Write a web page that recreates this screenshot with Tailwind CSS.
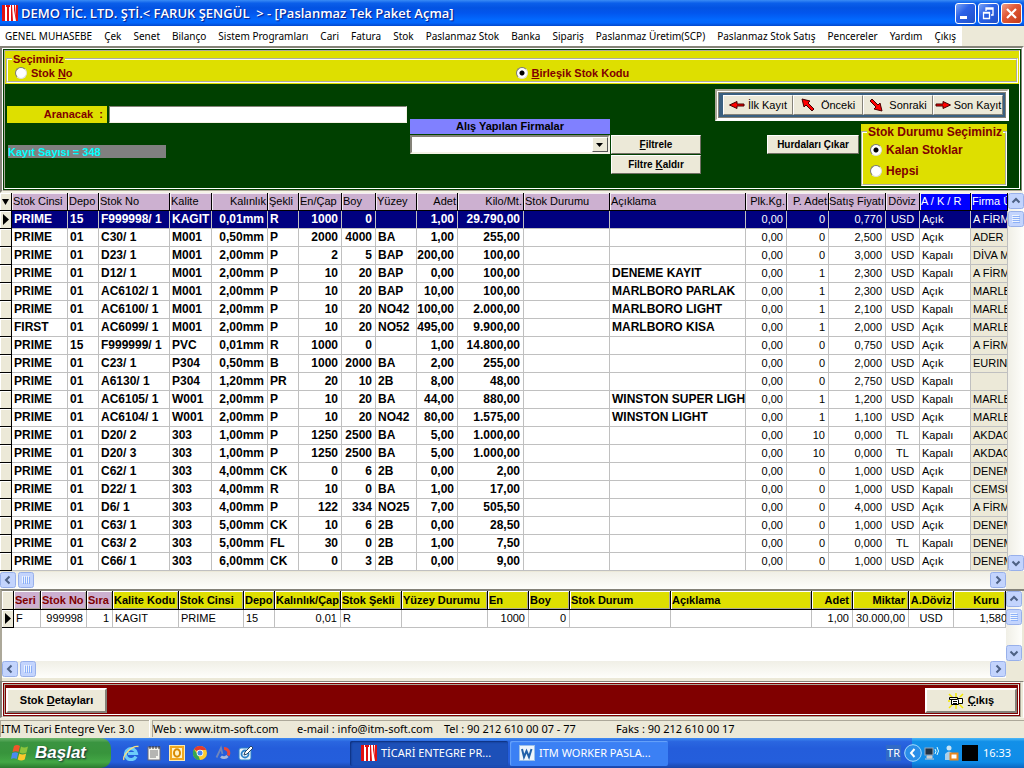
<!DOCTYPE html>
<html lang="tr">
<head>
<meta charset="utf-8">
<title>Paslanmaz Tek Paket Açma</title>
<script src="https://cdn.jsdelivr.net/npm/@tailwindcss/browser@4"></script>
</head>
<body class="flex min-h-screen flex-col overflow-x-hidden bg-[#ece9d8] font-['Liberation_Sans',Arial,sans-serif] text-[11px] text-black">

<svg class="hidden">
  <symbol id="itm" viewBox="0 0 16 16"><rect width="16" height="16" fill="#fff"/><path d="M0 0h3v16H0zM4 0h4v2H7v14H5V2H4zM9 0h1l1 16H9zM12 0h1l1 12V0h2v16h-2L12 5z" fill="#e01010"/></symbol>
  <symbol id="up" viewBox="0 0 16 16"><rect x=".5" y=".5" width="15" height="15" rx="2" fill="#c3d4fd" stroke="#98b0ea"/><path d="M4.500 9.500 8 6l3.500 3.500" fill="none" stroke="#4d6185" stroke-width="2"/></symbol>
  <symbol id="down" viewBox="0 0 16 16"><rect x=".5" y=".5" width="15" height="15" rx="2" fill="#c3d4fd" stroke="#98b0ea"/><path d="M4.500 6.500 8 10l3.500-3.500" fill="none" stroke="#4d6185" stroke-width="2"/></symbol>
  <symbol id="left" viewBox="0 0 16 16"><rect x=".5" y=".5" width="15" height="15" rx="2" fill="#c3d4fd" stroke="#98b0ea"/><path d="M9.500 4.500 6 8l3.500 3.500" fill="none" stroke="#4d6185" stroke-width="2"/></symbol>
  <symbol id="right" viewBox="0 0 16 16"><rect x=".5" y=".5" width="15" height="15" rx="2" fill="#c3d4fd" stroke="#98b0ea"/><path d="M6.500 4.500 10 8l-3.500 3.500" fill="none" stroke="#4d6185" stroke-width="2"/></symbol>
  <symbol id="gripv" viewBox="0 0 16 16"><rect x=".5" y=".5" width="15" height="15" rx="2" fill="#c3d4fd" stroke="#98b0ea"/><path d="M4 4.500h7M4 6.500h7M4 8.500h7M4 10.500h7" stroke="#eef4fe"/><path d="M5 5.500h7M5 7.500h7M5 9.500h7M5 11.500h7" stroke="#8cb0f8"/></symbol>
  <symbol id="griph" viewBox="0 0 16 16"><rect x=".5" y=".5" width="15" height="15" rx="2" fill="#c3d4fd" stroke="#98b0ea"/><path d="M4.500 4v7M6.500 4v7M8.500 4v7M10.500 4v7" stroke="#eef4fe"/><path d="M5.500 5v7M7.500 5v7M9.500 5v7M11.500 5v7" stroke="#8cb0f8"/></symbol>
</svg>

<header class="flex h-[26px] shrink-0 items-center gap-[3px] bg-[linear-gradient(180deg,#3a8cf5_0%,#0b5fea_12%,#0353e2_30%,#0256ee_50%,#0268fe_75%,#0265fb_88%,#0347cc_100%)] pr-[2px] pl-[2px]">
  <svg class="size-4"><use href="#itm"/></svg>
  <h1 class="flex-1 font-['Open_Sans','Noto_Sans',sans-serif] text-[13px] leading-[26px] font-semibold whitespace-pre text-white [text-shadow:1px_1px_1px_#0a1883]">DEMO TİC. LTD. ŞTİ.&lt; FARUK ŞENGÜL  &gt; - [Paslanmaz Tek Paket Açma]</h1>
  <button aria-label="Simge durumuna küçült" class="size-[21px] rounded-[3px] border border-white bg-[linear-gradient(135deg,#7ba4f5,#2b62e8_40%,#2050c8)]"><svg viewBox="0 0 19 19"><path d="M4 12h7v3H4z" fill="#fff"/></svg></button>
  <button aria-label="Önceki boyut" class="-ml-px size-[21px] rounded-[3px] border border-white bg-[linear-gradient(135deg,#7ba4f5,#2b62e8_40%,#2050c8)]"><svg viewBox="0 0 19 19"><path d="M7 7V4h7v7h-2M7 5h7M4.500 8.500h6v6h-6zM4 9h7" fill="none" stroke="#fff" stroke-width="1.300"/></svg></button>
  <button aria-label="Kapat" class="-ml-px size-[21px] rounded-[3px] border border-white bg-[linear-gradient(135deg,#f0a08a,#e25a38_40%,#c33a18)]"><svg viewBox="0 0 19 19"><path d="m5 5 9 9M14 5l-9 9" stroke="#fff" stroke-width="2.200"/></svg></button>
</header>

<nav class="flex h-5 shrink-0">
  <div id="menu" class="flex items-center gap-3 bg-white pr-[6px] pb-px pl-[5px] font-['Noto_Sans',sans-serif] text-[10px] leading-[18px] whitespace-nowrap"></div>
</nav>

<!-- search and filter panel -->
<section class="shrink-0 border-2 border-t-[#848278] border-r-white border-b-[#f4f2e6] border-l-[#848278]">
 <div class="border border-t-white border-r-[#848278] border-b-[#aca899] border-l-white bg-[#004000] p-px">
  <div class="border border-t-[#aca899] border-r-white border-b-white border-l-[#aca899]">
   <div class="bg-[#dedf00] px-px pt-px pb-px font-bold text-[#800000]">
    <fieldset class="min-w-0 border-2 border-[#fffff4] pb-px pl-[7px] [border-style:groove]">
     <legend class="-ml-[3px] px-px leading-[14px]">Seçiminiz</legend>
     <div class="grid grid-cols-2">
      <label class="flex h-[14px] items-center gap-1"><input type="radio" name="ara" class="size-3 appearance-none rounded-full border border-t-[#777] border-r-[#ddd] border-b-[#ddd] border-l-[#777] bg-white"><span>Stok <u>N</u>o</span></label>
      <label class="flex h-[14px] items-center gap-1"><input type="radio" name="ara" checked class="size-3 appearance-none rounded-full border border-t-[#777] border-r-[#ddd] border-b-[#ddd] border-l-[#777] bg-white checked:bg-[radial-gradient(circle,#000_2px,#fff_3px)]"><span><u>B</u>irleşik Stok Kodu</span></label>
     </div>
    </fieldset>
   </div>

   <div class="flex h-[104px] items-start font-bold">
    <div class="w-[402px] pt-[22px] pl-[2px]">
     <div class="flex gap-[2px]">
      <label for="q" class="h-[17px] w-[100px] bg-[#dedf00] pr-1 text-right leading-[17px] whitespace-pre text-[#800000]">Aranacak  :</label>
      <input id="q" type="text" class="h-[17px] min-w-0 flex-1 border border-t-[#848278] border-r-[#f4f2e6] border-b-[#f4f2e6] border-l-[#848278] bg-white px-1">
     </div>
     <p class="mt-[22px] ml-px h-[13px] w-[158px] bg-[#808080] leading-[14px] text-[#00ffff]">Kayıt Sayısı = 348</p>
    </div>
    <div class="ml-[3px] w-[200px] pt-[35px]">
     <label for="firma" class="block h-[15px] bg-[#8080ff] text-center leading-[15px]">Alış Yapılan Firmalar</label>
     <div class="relative mt-px">
      <select id="firma" class="block h-[19px] w-full appearance-none border-2 border-t-[#848278] border-r-[#f4f2e6] border-b-[#f4f2e6] border-l-[#848278] bg-white"><option></option></select>
      <svg class="pointer-events-none absolute top-[2px] right-[2px] h-[15px] w-4 border border-t-white border-r-[#555] border-b-[#555] border-l-white bg-[#ece9d8]" viewBox="0 0 14 13"><path d="M3 5h7L6.500 9z"/></svg>
     </div>
    </div>
    <div class="ml-px flex w-[90px] flex-col gap-px pt-[51px] text-[10px]">
     <button class="h-[19px] border border-t-white border-r-[#716f64] border-b-[#716f64] border-l-white bg-[#ece9d8] font-bold"><u>F</u>iltrele</button>
     <button class="h-[19px] border border-t-white border-r-[#716f64] border-b-[#716f64] border-l-white bg-[#ece9d8] font-bold">Filtre <u>K</u>aldır</button>
    </div>
    <div class="mt-[5px] mr-[10px] ml-auto w-[294px]">
     <div class="border-2 border-t-[#aca899] border-r-white border-b-white border-l-[#aca899] bg-white p-px">
      <div class="flex border border-[#848278] bg-[#3a6080] p-[2px] pl-[4px] font-normal whitespace-nowrap">
       <button class="flex h-5 w-[70px] items-center justify-center gap-[3px] border border-t-white border-r-[#848278] border-b-[#848278] border-l-white bg-[#ece9d8]"><svg class="h-3 w-4 shrink-0" viewBox="0 0 16 12"><path d="M.5 6 8 2.500V5h7v2H8v2.500z" fill="#f00" stroke="#400"/></svg>İlk Kayıt</button>
       <button class="flex h-5 w-[70px] items-center justify-center gap-[6px] border border-t-white border-r-[#848278] border-b-[#848278] border-l-white bg-[#ece9d8]"><svg class="size-[14px] shrink-0" viewBox="0 0 14 14"><path d="m1 1 8 2-2 2 6 6-2 2-6-6-2 2z" fill="#f00" stroke="#400"/></svg>Önceki</button>
       <button class="flex h-5 w-[70px] items-center justify-center gap-[6px] border border-t-white border-r-[#848278] border-b-[#848278] border-l-white bg-[#ece9d8]"><svg class="size-[14px] shrink-0" viewBox="0 0 14 14"><path d="m13 13-8-2 2-2-6-6 2-2 6 6 2-2z" fill="#f00" stroke="#400"/></svg>Sonraki</button>
       <button class="flex h-5 min-w-0 flex-1 items-center justify-center gap-[3px] border border-t-white border-r-[#848278] border-b-[#848278] border-l-white bg-[#ece9d8]"><svg class="h-3 w-4 shrink-0" viewBox="0 0 16 12"><path d="M15.500 6 8 2.500V5H1v2h7v2.500z" fill="#f00" stroke="#400"/></svg>Son Kayıt</button>
      </div>
     </div>
     <div class="mt-[3px] mr-[2px] flex items-start justify-end gap-[2px]">
      <button class="mt-[11px] h-[19px] w-[92px] border border-t-white border-r-[#716f64] border-b-[#716f64] border-l-white bg-[#ece9d8] text-[10px] font-bold">Hurdaları Çıkar</button>
      <div class="h-[62px] w-[146px] bg-[#dedf00] text-[12px] text-[#800000]">
       <fieldset class="h-[62px] min-w-0 border-2 border-[#fffff4] pl-[7px] [border-style:groove]">
        <legend class="-ml-[3px] px-px leading-4 whitespace-nowrap">Stok Durumu Seçiminiz</legend>
        <label class="mt-[2px] flex h-4 items-center gap-1"><input type="radio" name="durum" checked class="size-3 appearance-none rounded-full border border-t-[#777] border-r-[#ddd] border-b-[#ddd] border-l-[#777] bg-white checked:bg-[radial-gradient(circle,#000_2px,#fff_3px)]">Kalan Stoklar</label>
        <label class="mt-[5px] flex h-4 items-center gap-1"><input type="radio" name="durum" class="size-3 appearance-none rounded-full border border-t-[#777] border-r-[#ddd] border-b-[#ddd] border-l-[#777] bg-white">Hepsi</label>
       </fieldset>
      </div>
     </div>
    </div>
   </div>
  </div>
 </div>
</section>

<!-- stock grid -->
<section class="shrink-0">
  <div class="flex">
    <div class="min-w-0 flex-1 overflow-hidden bg-white">
      <table id="t1" class="w-full table-fixed border-separate border-spacing-0"></table>
    </div>
    <div class="flex w-4 flex-col bg-[linear-gradient(90deg,#f0efe6,#fefefb)]">
      <svg class="size-4"><use href="#up"/></svg><svg class="mt-[2px] size-4"><use href="#gripv"/></svg><svg class="mt-auto size-4"><use href="#down"/></svg>
    </div>
  </div>
  <div class="flex h-[18px] items-end pr-[18px]"><div class="flex h-[17px] flex-1 gap-[2px] bg-[linear-gradient(180deg,#f0efe6,#fefefb)]">
    <svg class="size-4"><use href="#left"/></svg><svg class="size-4"><use href="#griph"/></svg><svg class="ml-auto size-4"><use href="#right"/></svg>
  </div></div>
</section>

<!-- package grid -->
<section class="flex flex-1 flex-col border-t-2 border-l-2 border-t-[#848278] border-l-[#aca899] pr-[2px] pb-[3px]">
  <div class="flex flex-1">
    <div class="min-w-0 flex-1 overflow-hidden bg-white">
      <table id="t2" class="w-full table-fixed border-separate border-spacing-0"></table>
    </div>
    <div class="flex w-4 flex-col bg-[linear-gradient(90deg,#f0efe6,#fefefb)]">
      <svg class="size-4"><use href="#up"/></svg><svg class="mt-[2px] size-4"><use href="#gripv"/></svg><svg class="mt-auto size-4"><use href="#down"/></svg>
    </div>
  </div>
  <div class="flex pr-4"><div class="flex h-[17px] flex-1 gap-[2px] bg-[linear-gradient(180deg,#f0efe6,#fefefb)]">
    <svg class="size-4"><use href="#left"/></svg><svg class="size-4"><use href="#griph"/></svg><svg class="ml-auto size-4"><use href="#right"/></svg>
  </div></div>
</section>

<section class="shrink-0 border border-l-2 border-t-[#848278] border-r-white border-b-[#f4f2e6] border-l-[#848278] pr-[2px]">
 <div class="border border-t-white border-r-[#aca899] border-b-[#aca899] border-l-white bg-[#800000] p-px">
  <div class="flex h-[31px] justify-between border border-t-[#aca899] border-r-white border-b-white border-l-[#aca899] pt-[3px] pr-px pl-px">
    <button class="h-[25px] w-[101px] border-2 border-t-white border-r-[#848278] border-b-[#848278] border-l-white bg-[#ece9d8] font-bold">Stok <u>D</u>etayları</button>
    <button class="flex h-[25px] w-[92px] items-center justify-center gap-1 border-2 border-t-white border-r-[#848278] border-b-[#848278] border-l-white bg-[#ece9d8] font-bold"><svg class="size-4" viewBox="0 0 16 16"><path d="m1 1 4 4M15 1l-4 4M1 15l4-4M15 15l-4-4M8 0v16M0 8h16" stroke="#f4e800" stroke-width="1.500"/><path d="M1.500 5.500h8l1-1h2l1 1h2v5h-3l-1 1h-8z" fill="#fff"/><path d="M1.500 4.500h8v2h-8zM9.500 5.500h5M3.500 6.500v5h7v-5M5 8.500h4M5 10.500h4M10.500 10.500h4v-5" fill="none" stroke="#000"/></svg><span><u>Ç</u>ıkış</span></button>
  </div>
 </div>
</section>

<footer class="flex h-5 shrink-0 items-end gap-[3px] pb-px font-['Noto_Sans',sans-serif] text-[11px] leading-4 whitespace-nowrap">
  <div class="h-[17px] w-[149px] border-t border-l border-[#aca899] shadow-[1px_0_#fff]">ITM Ticari Entegre Ver. 3.0</div>
  <div class="flex h-[17px] flex-1 border-t border-l border-[#aca899]">
    <span class="w-36">Web : www.itm-soft.com</span><span class="w-[147px]">e-mail : info@itm-soft.com</span><span class="w-[172px]">Tel : 90 212 610 00 07 - 77</span><span>Faks : 90 212 610 00 17</span>
  </div>
</footer>

<div class="flex h-[30px] shrink-0 items-stretch bg-[linear-gradient(180deg,#3f8cf3_0%,#2a66e0_12%,#245ddb_35%,#245edc_80%,#1a45a8_100%)] font-['Noto_Sans',sans-serif] text-[11px] text-white">
  <button class="flex w-[111px] items-center gap-[6px] rounded-r-[10px] bg-[linear-gradient(180deg,#6bb56b_0%,#3a9440_15%,#38943c_50%,#43a745_80%,#2b7a2e_100%)] pl-[11px] font-['Liberation_Sans',sans-serif] text-[17px] font-bold italic [text-shadow:1px_1px_2px_#123]">
    <svg class="size-[18px]" viewBox="0 0 18 18"><path d="M3 2q3-2 6 0L7.500 8Q5 6.500 1.500 8z" fill="#f0562a"/><path d="M10 2.500q3 2 7 0L15.500 8.500q-3.500 2-7 0z" fill="#8cc43c"/><path d="M1.200 9q3.200-1.500 6 0L5.700 15q-3-1.700-5.700 0z" fill="#4a8af0"/><path d="M8.200 9.500q3.300 2 7 0L13.700 15.500q-3.500 2-7 0z" fill="#fcc82c"/></svg>Başlat</button>
  <div class="ml-3 flex w-[227px] items-center gap-[7px]">
    <svg class="size-4" viewBox="0 0 16 16"><path d="M13 11.500A5.500 5.500 0 1 1 13.500 8.500H5" fill="none" stroke="#6cccfa" stroke-width="3.200"/><path d="M1 15C-1 11 9 0 15.500 1.500" fill="none" stroke="#f8e080" stroke-width="1.300"/></svg>
    <svg class="size-4" viewBox="0 0 16 16"><rect x="2" y="2" width="12" height="13" fill="#f4f4ee" stroke="#667"/><path d="M4 1v3M7 1v3M10 1v3M13 1v3" stroke="#333"/><path d="M4 6h8M4 8h8M4 10h8M4 12h6" stroke="#777"/></svg>
    <svg class="size-4" viewBox="0 0 16 16"><rect x=".5" y=".5" width="15" height="15" fill="#f0a820" stroke="#fbe9b0"/><rect x="3" y="3" width="10" height="10" fill="#fff3c8"/><ellipse cx="8" cy="8" rx="3" ry="3.800" fill="none" stroke="#d88a00" stroke-width="2"/></svg>
    <svg class="size-4" viewBox="0 0 16 16"><circle cx="8" cy="8" r="7" fill="#fccc30"/><path d="M8 8 2 4.200A7 7 0 0 1 14.200 5H8z" fill="#e23b2e"/><path d="M2 4.200 6 10l2 5A7 7 0 0 1 2 4.200" fill="#35a552"/><circle cx="8" cy="8" r="3.300" fill="#fff"/><circle cx="8" cy="8" r="2.500" fill="#4587f0"/></svg>
    <svg class="size-4" viewBox="0 0 16 16"><path d="M1.500 12.500 6 3l1.500 6" fill="none" stroke="#6f86bc" stroke-width="1.800"/><path d="M9 3.500a4.500 4.500 0 0 1 4 7" fill="none" stroke="#e84838" stroke-width="3"/><path d="M12.500 11a4.500 4.500 0 0 1-6.500.5" fill="none" stroke="#a8b8d8" stroke-width="2.800"/></svg>
    <svg class="size-4" viewBox="0 0 16 16"><rect x="1" y="3" width="12" height="12" rx="2" fill="#e8f3fb" stroke="#2a80c8"/><circle cx="7" cy="9" r="3.500" fill="none" stroke="#2a80c8" stroke-width="1.800"/><path d="m6 10 1-3 6-6 2 2-6 6z" fill="#fff" stroke="#246"/></svg>
  </div>
  <div class="flex flex-1 items-center gap-[2px]">
    <button class="flex h-[25px] w-[158px] items-center gap-1 rounded-[2px] bg-[#1d50b8] pl-[11px] whitespace-nowrap shadow-[inset_1px_1px_2px_#0c2c78]"><svg class="size-4 shrink-0"><use href="#itm"/></svg>TİCARİ ENTEGRE PR...</button>
    <button class="flex h-[25px] w-[158px] items-center gap-1 rounded-[2px] bg-[#3b80f4] pl-[9px] whitespace-nowrap shadow-[inset_1px_1px_1px_#6aa4fa]"><svg class="size-4 shrink-0" viewBox="0 0 16 16"><rect x=".5" y=".5" width="15" height="15" fill="#eef5fc" stroke="#9cc0e8"/><path d="m3 4 2 8 2.500-6L10 12l2.500-8" fill="none" stroke="#2060a8" stroke-width="2"/></svg>ITM WORKER PASLA...</button>
  </div>
  <div class="flex items-center"><span class="bg-[#316ac5] px-px">TR</span></div>
  <div class="ml-[11px] flex w-[112px] items-center gap-[3px] bg-[linear-gradient(180deg,#4cb8f8_0%,#1290e8_12%,#0f8ce8_80%,#0c66c0_100%)] whitespace-nowrap">
    <svg class="-ml-2 size-[18px] shrink-0" viewBox="0 0 18 18"><circle cx="9" cy="9" r="8.300" fill="#2a8ee8" stroke="#a8dcfc"/><path d="M10.500 5 7 9l3.500 4" fill="none" stroke="#fff" stroke-width="2"/></svg>
    <svg class="-ml-px size-4 shrink-0" viewBox="0 0 16 16"><rect x="1" y="3" width="8" height="7" fill="#234" stroke="#9ab"/><path d="M3 11h5v2H3zM1 14h9" fill="#ccc" stroke="#ccc"/><path d="M11 4q2 2 0 5M13 2q3 4 0 8" fill="none" stroke="#dff"/></svg>
    <svg class="size-4 shrink-0" viewBox="0 0 16 16"><circle cx="6" cy="3" r="2.500" fill="#c8e4f4"/><path d="M2 15V9q4-5 8 0v6z" fill="#a8d0ec"/><rect x="7.500" y="8.500" width="7" height="6" fill="#fff" stroke="#e88820" stroke-width="2"/></svg>
    <span class="size-4 shrink-0 bg-black"></span><span class="ml-[2px]">16:33</span>
  </div>
</div>

<script>
document.getElementById('menu').innerHTML = ['GENEL MUHASEBE','Çek','Senet','Bilanço','Sistem Programları','Cari','Fatura','Stok','Paslanmaz Stok','Banka','Sipariş','Paslanmaz Üretim(SCP)','Paslanmaz Stok Satış','Pencereler','Yardım','Çıkış']
  .map(t => `<button>${t}</button>`).join('');

const cell = (text, align, extra) =>
  `<div class="flex h-[17px] overflow-hidden whitespace-pre leading-[17px] ${align === 'r' ? 'justify-end pr-[3px]' : align === 'c' ? 'justify-center' : 'pl-[2px]'} ${extra || ''}">${text}</div>`;
const cols = widths => '<colgroup>' + widths.map(w => `<col${w ? ` style="width:${w}px"` : ''}>`).join('') + '</colgroup>';

const w1 = [12,56,31,71,42,56,31,43,34,41,41,66,86,136,41,42,57,34,51,0];
const h1 = [['Stok Cinsi','l'],['Depo','l'],['Stok No','l'],['Kalite','l'],['Kalınlık','r'],['Şekli','l'],['En/Çap','l'],['Boy','l'],['Yüzey','l'],['Adet','r'],['Kilo/Mt.','r'],['Stok Durumu','l'],['Açıklama','l'],['Plk.Kg.','r'],['P. Adet','r'],['Satış Fiyatı','r'],['Döviz','c'],['A / K / R','l'],['Firma Ü','l']];
const a1 = 'llllrlrrlrrllrrrcll';
const rows = `PRIME|15|F999998/ 1|KAGIT|0,01mm|R|1000|0||1,00|29.790,00|||0,00|0|0,770|USD|Açık|A FİRM
PRIME|01|C30/ 1|M001|0,50mm|P|2000|4000|BA|1,00|255,00|||0,00|0|2,500|USD|Açık|ADER
PRIME|01|D23/ 1|M001|2,00mm|P|2|5|BAP|200,00|100,00|||0,00|0|3,000|USD|Kapalı|DİVA M
PRIME|01|D12/ 1|M001|2,00mm|P|10|20|BAP|0,00|100,00||DENEME KAYIT|0,00|1|2,300|USD|Kapalı|A FİRM
PRIME|01|AC6102/ 1|M001|2,00mm|P|10|20|BAP|10,00|100,00||MARLBORO PARLAK|0,00|1|2,300|USD|Açık|MARLB
PRIME|01|AC6100/ 1|M001|2,00mm|P|10|20|NO42|100,00|2.000,00||MARLBORO LIGHT|0,00|1|2,100|USD|Kapalı|MARLB
FIRST|01|AC6099/ 1|M001|2,00mm|P|10|20|NO52|495,00|9.900,00||MARLBORO KISA|0,00|1|2,000|USD|Açık|MARLB
PRIME|15|F999999/ 1|PVC|0,01mm|R|1000|0||1,00|14.800,00|||0,00|0|0,750|USD|Açık|A FİRM
PRIME|01|C23/ 1|P304|0,50mm|B|1000|2000|BA|2,00|255,00|||0,00|0|2,000|USD|Açık|EURIN
PRIME|01|A6130/ 1|P304|1,20mm|PR|20|10|2B|8,00|48,00|||0,00|0|2,750|USD|Kapalı|
PRIME|01|AC6105/ 1|W001|2,00mm|P|10|20|BA|44,00|880,00||WINSTON SUPER LIGH|0,00|1|1,200|USD|Kapalı|MARLB
PRIME|01|AC6104/ 1|W001|2,00mm|P|10|20|NO42|80,00|1.575,00||WINSTON LIGHT|0,00|1|1,100|USD|Açık|MARLB
PRIME|01|D20/ 2|303|1,00mm|P|1250|2500|BA|5,00|1.000,00|||0,00|10|0,000|TL|Kapalı|AKDAG
PRIME|01|D20/ 3|303|1,00mm|P|1250|2500|BA|5,00|1.000,00|||0,00|10|0,000|TL|Kapalı|AKDAG
PRIME|01|C62/ 1|303|4,00mm|CK|0|6|2B|0,00|2,00|||0,00|0|1,000|USD|Açık|DENEM
PRIME|01|D22/ 1|303|4,00mm|R|10|0|BA|1,00|17,00|||0,00|0|1,000|USD|Kapalı|CEMSU
PRIME|01|D6/ 1|303|4,00mm|P|122|334|NO25|7,00|505,50|||0,00|0|4,000|USD|Açık|A FİRM
PRIME|01|C63/ 1|303|5,00mm|CK|10|6|2B|0,00|28,50|||0,00|0|1,000|USD|Açık|DENEM
PRIME|01|C63/ 2|303|5,00mm|FL|30|0|2B|1,00|7,50|||0,00|0|0,000|TL|Kapalı|DENEM
PRIME|01|C66/ 1|303|6,00mm|CK|0|3|2B|0,00|9,00|||0,00|0|1,000|USD|Açık|DENEM`.split('\n').map(r => r.split('|'));
const marker = '<svg class="h-[17px] w-[11px]" viewBox="0 0 11 17"><path d="M3 3v11l6-5.500z"/></svg>';
const grip = 'border-r border-b border-black bg-[#ece9d8] p-0 shadow-[inset_1px_1px_#fff]';

document.getElementById('t1').innerHTML = cols(w1) + '<thead><tr>' +
  `<th class="${grip}"><svg class="h-[17px] w-[11px]" viewBox="0 0 11 17"><path d="M2 6h7l-3.500 6z"/></svg></th>` +
  h1.map(([t, a], i) => `<th class="border-r border-b border-black p-0 font-normal shadow-[inset_1px_1px_#f4ecf4] ${i > 16 ? 'bg-[#0000ff] text-white' : 'bg-[#ccb0d0]'}">${cell(t, a, a === 'r' ? '-mr-[2px]' : '-ml-px')}</th>`).join('') +
  '</tr></thead><tbody>' +
  rows.map((r, n) => `<tr><td class="${grip}">${n ? '' : marker}</td>` +
    r.map((t, i) => `<td class="border-r border-b border-[#c0c0c0] p-0 ${i < 13 ? 'text-[12px] font-bold' : ''} ${n === 0 ? 'bg-[#000080] text-white' : i === 18 ? 'bg-[#ece9d8]' : ''}">${cell(t, a1[i])}</td>`).join('') + '</tr>').join('') + '</tbody>';

const w2 = [12,27,46,26,66,65,31,66,61,86,41,41,101,141,41,56,45,0];
const h2 = ['Seri','Stok No','Sıra','Kalite Kodu','Stok Cinsi','Depo','Kalınlık/Çap','Stok Şekli','Yüzey Durumu','En','Boy','Stok Durum','Açıklama','Adet','Miktar','A.Döviz','Kuru'];
const a2h = 'lllllllllllllrrcr', a2 = 'lrrlllrllrrllrrcr';
const r2 = ['F','999998','1','KAGIT','PRIME','15','0,01','R','','1000','0','','','1,00','30.000,00','USD','1,580'];
document.getElementById('t2').innerHTML = cols(w2) + `<thead><tr><th class="${grip}"></th>` +
  h2.map((t, i) => `<th class="h-[19px] border-r border-b border-black p-0 font-bold shadow-[inset_1px_1px_#fff,inset_-1px_-1px_#aca899] ${i < 3 ? 'bg-[#ccb0d0] text-[#800000]' : 'bg-[#dedf00]'}">${cell(t, a2h[i], a2h[i] === 'l' ? '-ml-px' : i === 16 ? 'pr-[6px]' : '')}</th>`).join('') +
  `</tr></thead><tbody><tr><td class="${grip}">${marker}</td>` +
  r2.map((t, i) => `<td class="border-r border-b border-[#c0c0c0] p-0">${cell(t, a2[i], i === 16 ? '-mr-[5px]' : '')}</td>`).join('') + '</tr></tbody>';
</script>
</body>
</html>
